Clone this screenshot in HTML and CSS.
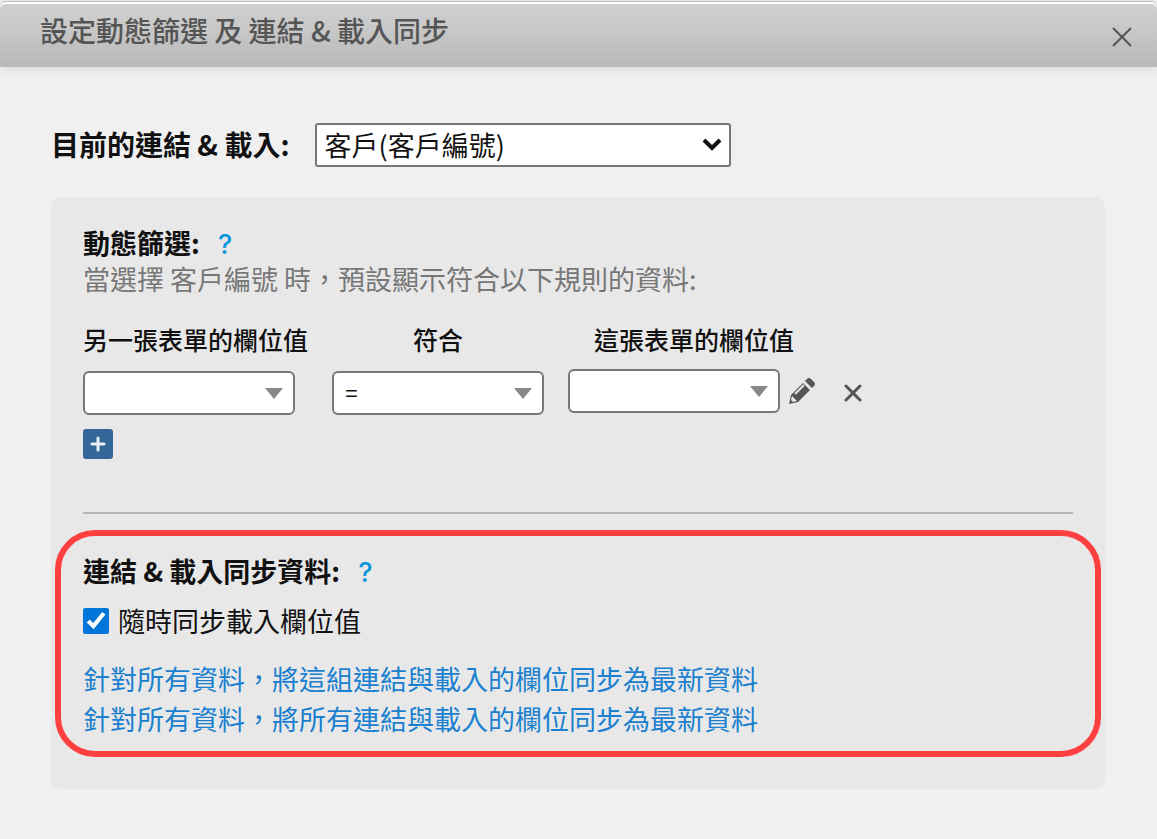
FILE: index.html
```html
<!DOCTYPE html>
<html lang="zh-TW">
<head>
    <meta charset="UTF-8">
    <meta name="viewport" content="width=device-width, initial-scale=1.0">
    <title>設定動態篩選 及 連結 &amp; 載入同步</title>
    <link rel="stylesheet" href="styles.css">
</head>
<body>
    <header class="dialog-header">
        <h1>設定動態篩選 及 連結 &amp; 載入同步</h1>
        <button type="button" class="icon-btn" aria-label="關閉">
            <svg width="22" height="22" viewBox="0 0 22 22"><path d="M2 2L20 20M20 2L2 20" stroke="#555" stroke-width="2" fill="none"/></svg>
        </button>
    </header>
    <main class="dialog-body">
        <div class="current">
            <label for="currentLink">目前的連結 &amp; 載入:</label>
            <select id="currentLink" class="link-select">
                <option>客戶(客戶編號)</option>
            </select>
        </div>
        <div class="panel">
            <section class="filter">
                <h2>動態篩選: <a class="help" href="#">?</a></h2>
                <p class="hint">當選擇 客戶編號 時，預設顯示符合以下規則的資料:</p>
                <table class="rules">
                    <thead>
                        <tr>
                            <th id="colOther">另一張表單的欄位值</th>
                            <th id="colMatch">符合</th>
                            <th id="colThis">這張表單的欄位值</th>
                            <td></td>
                        </tr>
                    </thead>
                    <tbody>
                        <tr>
                            <td><select class="rule-select" aria-labelledby="colOther"><option></option></select></td>
                            <td><select class="rule-select" aria-labelledby="colMatch"><option>=</option></select></td>
                            <td>
                                <div class="value">
                                    <select class="rule-select" aria-labelledby="colThis"><option></option></select>
                                    <button type="button" class="icon-btn" aria-label="編輯">
                                        <svg width="28" height="28" viewBox="0 0 28 28">
                                            <path fill="#555" d="M1 27L3 18L15 6L22 13L10 25ZM17 4L19 2Q21 0 23 2L26 5Q28 7 26 9L24 11Z"/>
                                            <path d="M7 17L16 8" stroke="#e8e8e8" stroke-width="2"/>
                                            <path d="M4 19L9 24L5 25L3 23Z" fill="#e8e8e8"/>
                                        </svg>
                                    </button>
                                </div>
                            </td>
                            <td>
                                <button type="button" class="icon-btn" aria-label="刪除">
                                    <svg width="18" height="18" viewBox="0 0 18 18"><path d="M2 2L16 16M16 2L2 16" stroke="#555" stroke-width="3" stroke-linecap="round" fill="none"/></svg>
                                </button>
                            </td>
                        </tr>
                    </tbody>
                </table>
                <button type="button" class="add-btn" aria-label="新增">
                    <svg width="16" height="16" viewBox="0 0 16 16"><path d="M8 2V14M2 8H14" stroke="#e8eef4" stroke-width="3" stroke-linecap="round"/></svg>
                </button>
            </section>
            <hr>
            <section class="sync">
                <h2>連結 &amp; 載入同步資料: <a class="help" href="#">?</a></h2>
                <div class="check">
                    <input type="checkbox" id="autoSync" checked>
                    <label for="autoSync">隨時同步載入欄位值</label>
                </div>
                <a class="action" href="#">針對所有資料，將這組連結與載入的欄位同步為最新資料</a>
                <a class="action" href="#">針對所有資料，將所有連結與載入的欄位同步為最新資料</a>
            </section>
        </div>
    </main>
</body>
</html>
```

FILE: styles.css
```css
* {
    box-sizing: border-box;
}
body {
    margin: 0;
    padding-top: 1px;
    background-color: #f0f0f0;
    color: #111;
    font-family: "Noto Sans CJK TC", "Noto Sans", sans-serif;
    font-size: 27px;
    line-height: 40px;
}
h1, h2, p {
    margin: 0;
}
h1, h2 {
    font-size: 27px;
    line-height: 40px;
}
a {
    text-decoration: none;
}
.dialog-header {
    display: flex;
    justify-content: space-between;
    align-items: center;
    height: 66px;
    padding: 0 24px 0 40px;
    border-top: 1px solid #bbb;
    border-radius: 6px 6px 0 0;
    background: linear-gradient(#d2d2d2, #b9b9b9);
    box-shadow: inset 0 2px #fff, 0 2px 12px rgba(0,0,0,0.1);
}
.dialog-header h1 {
    padding-bottom: 10px;
    color: #555;
    font-size: 28px;
    font-weight: 500;
}
.dialog-header .icon-btn {
    padding-top: 4px;
}
.icon-btn {
    display: flex;
    padding: 0;
    border: none;
    background: none;
    cursor: pointer;
}
.dialog-body {
    padding: 56px 52px 50px 51px;
}
.current {
    display: flex;
    align-items: center;
    gap: 25px;
    margin-bottom: 30px;
}
.current label {
    padding-bottom: 2px;
    font-size: 28px;
    font-weight: bold;
}
.link-select {
    width: 416px;
    height: 44px;
    padding: 0 8px 2px;
    border: 2px solid #777;
    border-radius: 3px;
    appearance: none;
    background: #fff url("data:image/svg+xml,%3Csvg xmlns='http://www.w3.org/2000/svg' width='20' height='14'%3E%3Cpath d='M2 2L10 10L18 2' fill='none' stroke='%23111' stroke-width='4'/%3E%3C/svg%3E") no-repeat right 7px center;
    color: #111;
    font: inherit;
}
.panel {
    padding: 28px 4px 32px;
    border-radius: 10px;
    background-color: #e8e8e8;
}
.filter {
    padding: 0 28px;
}
.filter h2 {
    line-height: 36px;
}
.help {
    margin-left: 12px;
    color: #0a94dc;
    font-family: Inter, sans-serif;
    font-weight: 500;
    line-height: 1;
}
.hint {
    color: #777;
    line-height: 36px;
}
.rules {
    margin: 24px 0 12px;
    border-collapse: collapse;
}
.rules th, .rules td {
    padding: 0 24px 0 0;
}
.rules th {
    padding-bottom: 12px;
    font-size: 25px;
    font-weight: 500;
    line-height: 36px;
}
.rule-select {
    display: block;
    width: 212px;
    height: 44px;
    padding: 0 11px;
    border: 2px solid #777;
    border-radius: 6px;
    appearance: none;
    background: #fff url("data:image/svg+xml,%3Csvg xmlns='http://www.w3.org/2000/svg' width='18' height='11'%3E%3Cpath d='M0 0H18L9 11Z' fill='%23888'/%3E%3C/svg%3E") no-repeat right 10px center;
    color: #111;
    font-family: "Liberation Sans", sans-serif;
    font-size: 22px;
}
.value {
    display: flex;
    align-items: center;
    gap: 8px;
    width: 252px;
    padding-bottom: 4px;
}
.add-btn {
    display: flex;
    align-items: center;
    justify-content: center;
    width: 30px;
    height: 30px;
    padding: 0;
    border: none;
    border-radius: 3px;
    background-color: #336699;
    cursor: pointer;
}
hr {
    margin: 53px 28px 16px;
    border: none;
    border-top: 2px solid #b5b5b5;
}
.sync {
    padding: 15px 22px 12px;
    border: 6px solid #ff4040;
    border-radius: 40px;
}
.check {
    display: flex;
    align-items: center;
    gap: 9px;
    margin: 10px 0 18px;
}
.check input {
    width: 26px;
    height: 26px;
    margin: 0;
    accent-color: #0075d9;
}
.action {
    display: block;
    color: #1a80cf;
}
```
